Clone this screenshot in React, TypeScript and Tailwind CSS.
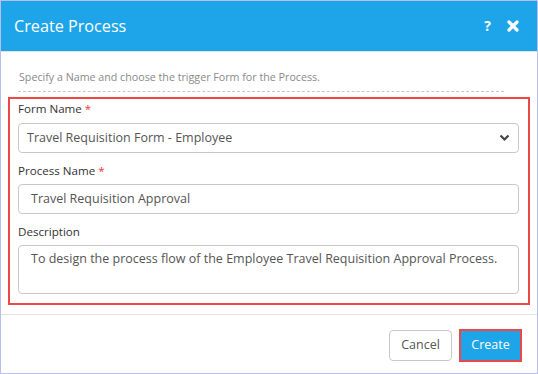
const font = { fontFamily: '"Open Sans", "Noto Sans", sans-serif' };

const Field = ({ label, required, children, top }: any) => (
  <div className={top}>
    <div className="h-[16px] text-[11.6px] leading-[16px] text-[#333]">
      {label}
      {required && <span className="text-[#e53935] ml-[3px]">*</span>}
    </div>
    {children}
  </div>
);

export default function App() {
  return (
    <div style={font} className="w-[538px] h-[374px] border border-[#b8c0ef] bg-white flex flex-col">
      <div className="h-[51px] bg-[#1ea5e9] border-b border-[#e2e2e2] flex items-center justify-between pl-[13px] pr-[18px]">
        <h1 className="text-[16.2px] text-white leading-none">Create Process</h1>
        <div className="flex items-center gap-[16px]">
          <span className="text-white text-[14px] font-bold leading-none">?</span>
          <svg width="12" height="12" viewBox="0 0 12 12">
            <path d="M2 2 L10 10 M10 2 L2 10" stroke="white" strokeWidth="3.2" strokeLinecap="round" />
          </svg>
        </div>
      </div>

      <div className="px-[17px] pt-[17px]">
        <p className="text-[10.7px] leading-[16px] text-[#8a8a8a] pl-[1px]">
          Specify a Name and choose the trigger Form for the Process.
        </p>
        <div className="mt-[6px] mr-[16px] border-t border-dashed border-[#c6c6c6]" />
      </div>

      <div className="mx-[7px] mt-[5px] border-2 border-[#f04646] pl-[8px] pr-[9px] pt-[2px] pb-[9px]">
        <Field label="Form Name" required>
          <div className="mt-[6px] h-[30px] rounded-[4px] border border-[#c9c9c9] flex items-center justify-between pl-[8px] pr-[8px]">
            <span className="text-[12.5px] text-[#555]">Travel Requisition Form - Employee</span>
            <svg width="11" height="8" viewBox="0 0 11 8">
              <path d="M1.5 1.5 L5.5 5.5 L9.5 1.5" stroke="#444" strokeWidth="2.2" fill="none" />
            </svg>
          </div>
        </Field>
        <Field label="Process Name" required top="mt-[10px]">
          <div className="mt-[5px] h-[30px] rounded-[4px] border border-[#c9c9c9] flex items-center pl-[12px]">
            <span className="text-[12.5px] text-[#555]">Travel Requisition Approval</span>
          </div>
        </Field>
        <Field label="Description" top="mt-[10px]">
          <div className="mt-[5px] h-[49px] rounded-[4px] border border-[#c9c9c9] pl-[12px] pt-[4px]">
            <div className="text-[12.5px] leading-[18px] text-[#555]">
              To design the process flow of the Employee Travel Requisition Approval Process.
            </div>
          </div>
        </Field>
      </div>

      <div className="mt-[9px] border-t border-[#e2e2e2] flex-1 flex items-start justify-end pr-[15px] pt-[14px]">
        <button className="mt-[1px] h-[31px] w-[63px] rounded-[4px] border border-[#c9c9c9] bg-white text-[12.5px] text-[#555]">
          Cancel
        </button>
        <div className="ml-[7px] border-2 border-[#f04646]">
          <button className="h-[29px] w-[59px] bg-[#1ea5e9] text-[12.5px] text-white block">
            Create
          </button>
        </div>
      </div>
    </div>
  );
}
